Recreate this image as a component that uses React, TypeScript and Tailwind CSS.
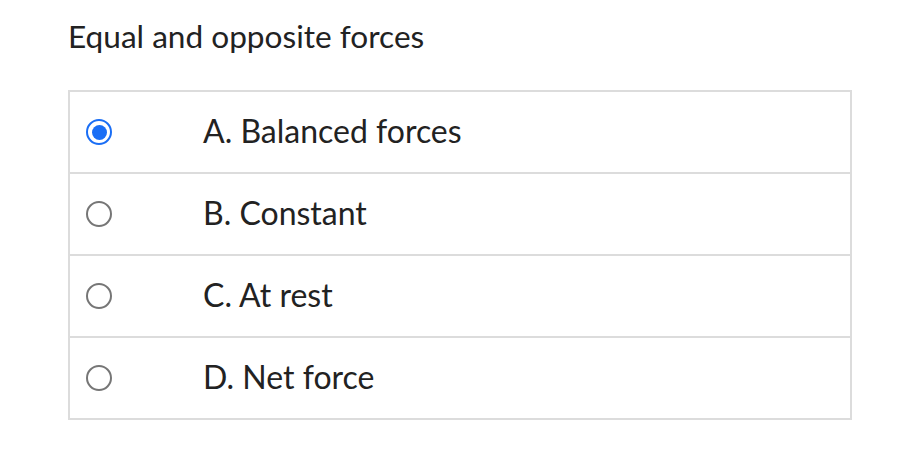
import React, { useState } from 'react';

const options = ['A. Balanced forces', 'B. Constant', 'C. At rest', 'D. Net force'];

const Radio: React.FC<{ checked: boolean }> = ({ checked }) => (
  <span className="flex h-[26px] w-[26px] items-center justify-center rounded-full">
    {checked ? (
      <span className="flex h-[26px] w-[26px] items-center justify-center rounded-full border-[2.5px] border-[#1a6ef5] bg-white">
        <span className="h-[15px] w-[15px] rounded-full bg-[#1a6ef5]" />
      </span>
    ) : (
      <span className="h-[26px] w-[26px] rounded-full border-2 border-[#767676] bg-white" />
    )}
  </span>
);

export default function App() {
  const [selected, setSelected] = useState(0);

  return (
    <div className="min-h-[476px] w-[910px] bg-white pl-[68px] pr-[58px] pt-[17px] text-[#222] font-['Lato','Liberation_Sans',sans-serif]">
      <h2 className="text-[31.6px] leading-[38px]">Equal and opposite forces</h2>
      <div className="mt-[35px] border-x-2 border-b-2 border-[#dcdcdc]">
        {options.map((opt, i) => (
          <div
            key={opt}
            onClick={() => setSelected(i)}
            className="flex h-[82px] items-center border-t-2 border-[#dcdcdc]"
          >
            <div className="w-[133px] pl-[16px]">
              <Radio checked={selected === i} />
            </div>
            <span className="pb-[2px] text-[32px] leading-none">{opt}</span>
          </div>
        ))}
      </div>
    </div>
  );
}
